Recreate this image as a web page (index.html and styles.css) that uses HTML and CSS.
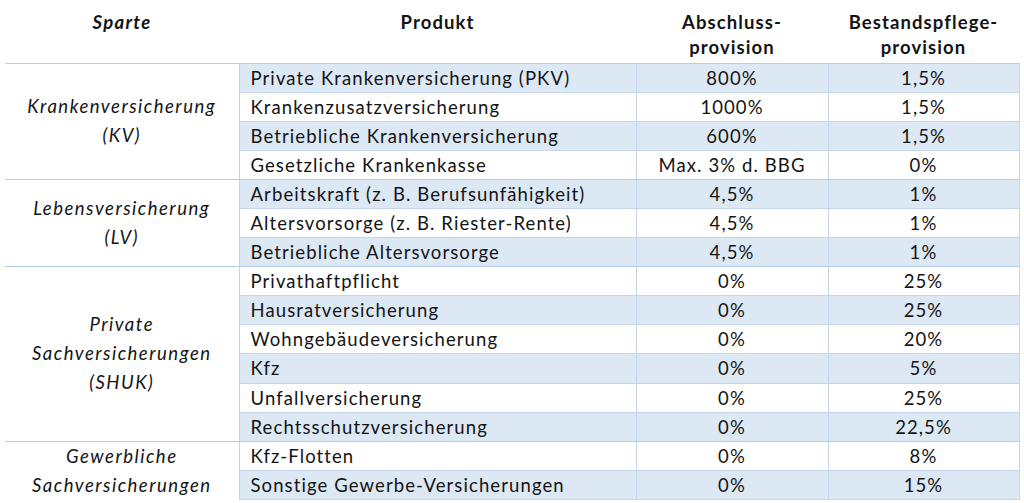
FILE: index.html
```html
<!DOCTYPE html>
<html lang="de">
<head>
<meta charset="utf-8">
<title>Provisionen</title>
<link rel="stylesheet" href="styles.css">
</head>
<body>
<table class="prov">
  <colgroup>
    <col class="c-sparte">
    <col class="c-produkt">
    <col class="c-abschluss">
    <col class="c-bestand">
  </colgroup>
  <thead>
    <tr>
      <th class="h-sparte">Sparte</th>
      <th>Produkt</th>
      <th>Abschluss-<br>provision</th>
      <th>Bestandspflege-<br>provision</th>
    </tr>
  </thead>
  <tbody>
    <tr class="blue group-start">
      <td class="sparte" rowspan="4">Krankenversicherung<br>(KV)</td>
      <td class="produkt">Private Krankenversicherung (PKV)</td>
      <td class="num">800%</td>
      <td class="num">1,5%</td>
    </tr>
    <tr>
      <td class="produkt">Krankenzusatzversicherung</td>
      <td class="num">1000%</td>
      <td class="num">1,5%</td>
    </tr>
    <tr class="blue">
      <td class="produkt">Betriebliche Krankenversicherung</td>
      <td class="num">600%</td>
      <td class="num">1,5%</td>
    </tr>
    <tr>
      <td class="produkt">Gesetzliche Krankenkasse</td>
      <td class="num">Max. 3% d. BBG</td>
      <td class="num">0%</td>
    </tr>
    <tr class="blue group-start">
      <td class="sparte" rowspan="3">Lebensversicherung<br>(LV)</td>
      <td class="produkt">Arbeitskraft (z. B. Berufsunfähigkeit)</td>
      <td class="num">4,5%</td>
      <td class="num">1%</td>
    </tr>
    <tr>
      <td class="produkt">Altersvorsorge (z. B. Riester-Rente)</td>
      <td class="num">4,5%</td>
      <td class="num">1%</td>
    </tr>
    <tr class="blue">
      <td class="produkt">Betriebliche Altersvorsorge</td>
      <td class="num">4,5%</td>
      <td class="num">1%</td>
    </tr>
    <tr class="group-start">
      <td class="sparte" rowspan="6">Private<br>Sachversicherungen<br>(SHUK)</td>
      <td class="produkt">Privathaftpflicht</td>
      <td class="num">0%</td>
      <td class="num">25%</td>
    </tr>
    <tr class="blue">
      <td class="produkt">Hausratversicherung</td>
      <td class="num">0%</td>
      <td class="num">25%</td>
    </tr>
    <tr>
      <td class="produkt">Wohngebäudeversicherung</td>
      <td class="num">0%</td>
      <td class="num">20%</td>
    </tr>
    <tr class="blue">
      <td class="produkt">Kfz</td>
      <td class="num">0%</td>
      <td class="num">5%</td>
    </tr>
    <tr>
      <td class="produkt">Unfallversicherung</td>
      <td class="num">0%</td>
      <td class="num">25%</td>
    </tr>
    <tr class="blue">
      <td class="produkt">Rechtsschutzversicherung</td>
      <td class="num">0%</td>
      <td class="num">22,5%</td>
    </tr>
    <tr class="group-start">
      <td class="sparte" rowspan="2">Gewerbliche<br>Sachversicherungen</td>
      <td class="produkt">Kfz-Flotten</td>
      <td class="num">0%</td>
      <td class="num">8%</td>
    </tr>
    <tr class="blue">
      <td class="produkt">Sonstige Gewerbe-Versicherungen</td>
      <td class="num">0%</td>
      <td class="num">15%</td>
    </tr>
  </tbody>
</table>
</body>
</html>
```

FILE: styles.css
```css
html, body {
  margin: 0;
  padding: 0;
  background: #ffffff;
}

body {
  padding-left: 5px;
  font-family: Lato, "Open Sans", "Liberation Sans", sans-serif;
  color: #141414;
}

.prov {
  border-collapse: collapse;
  table-layout: fixed;
  width: 1014px;
  font-size: 18.5px;
  letter-spacing: 1.1px;
}

.c-sparte { width: 234px; }
.c-produkt { width: 397px; }
.c-abschluss { width: 192px; }
.c-bestand { width: 191px; }

.prov thead th {
  height: 63px;
  box-sizing: border-box;
  padding: 10px 0 0 0;
  vertical-align: top;
  font-weight: 700;
  line-height: 25px;
  text-align: center;
  border-bottom: 1px solid #b7cde8;
}

.prov thead th.h-sparte {
  font-style: italic;
  letter-spacing: 1.3px;
}

.prov tbody td {
  height: 29.1px;
  box-sizing: border-box;
  padding: 0;
  line-height: 28px;
  border-top: 1px solid #c3d5ec;
  border-left: 1px solid #c3d5ec;
  border-right: 1px solid #c3d5ec;
  white-space: nowrap;
}

.prov tbody tr.blue td {
  background: #dde8f5;
}

.prov tbody tr.blue td.sparte {
  background: #ffffff;
}

.prov tbody tr.group-start td {
  border-top: 1px solid #b3cbe8;
}

.prov tbody tr:last-child td {
  border-bottom: 1px solid #c3d5ec;
}

.prov tbody td.sparte {
  border-left: none;
  text-align: center;
  font-style: italic;
  letter-spacing: 1.5px;
  line-height: 29px;
  vertical-align: middle;
}

.prov tbody td.produkt {
  padding-left: 11px;
  text-align: left;
}

.prov tbody td.num {
  text-align: center;
}
```
